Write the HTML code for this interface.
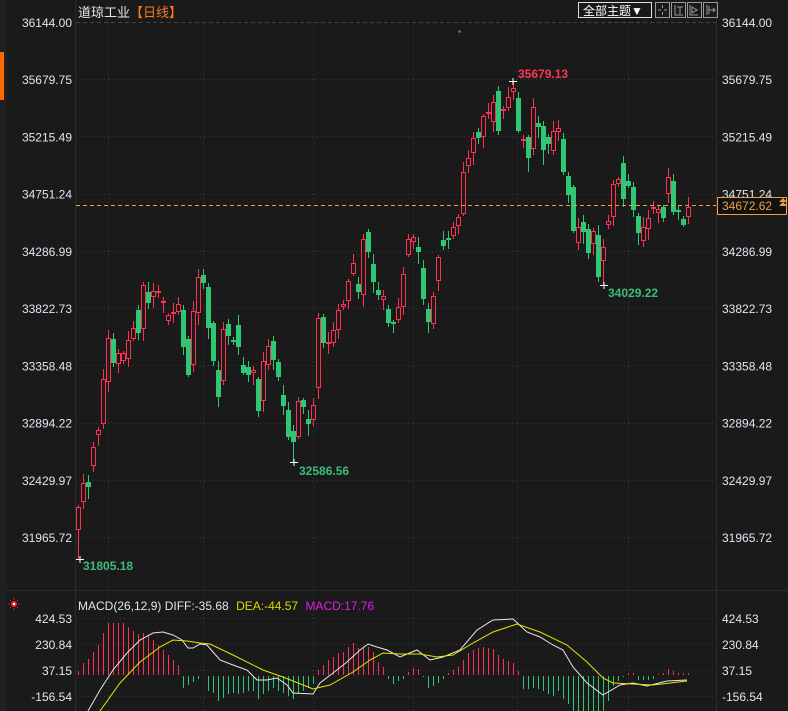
<!DOCTYPE html>
<html><head><meta charset="utf-8"><style>
html,body{margin:0;padding:0;background:#1a1a1a;}
body{width:788px;height:711px;overflow:hidden;position:relative;font-family:"Liberation Sans","Noto Sans CJK SC",sans-serif;}
svg{position:absolute;left:0;top:0;}
</style></head><body>
<svg id="s" width="788" height="711" xmlns="http://www.w3.org/2000/svg" font-family="Liberation Sans, Noto Sans CJK SC, sans-serif">
<rect width="788" height="711" fill="#1a1a1a"/>
<rect x="0" y="0" width="7" height="711" fill="#202022"/>
<rect x="0" y="52" width="4" height="48" fill="#ff6a00"/>
<line x1="75.5" y1="0" x2="75.5" y2="711" stroke="#2a2a2a"/>
<line x1="716.5" y1="0" x2="716.5" y2="711" stroke="#2a2a2a"/>
<line x1="7" y1="590.5" x2="788" y2="590.5" stroke="#2a2a2a"/>
<g id="grid" stroke="#3a3a3a" stroke-dasharray="1,3"></g>
<line x1="76" y1="22.5" x2="716" y2="22.5" stroke="#444" stroke-dasharray="4,3"/>
<g id="lbl" font-size="12" fill="#dfe6f0"></g>
<text x="78" y="17" font-size="13" fill="#e8e8e8">道琼工业</text>
<text x="130" y="17" font-size="13" fill="#ff7a1a">【日线】</text>
<rect x="578.5" y="2.5" width="73" height="15" fill="#1a1a1a" stroke="#e0e0e0"/>
<text x="583" y="15" font-size="12" fill="#fff">全部主题▼</text>
<g stroke="#999" fill="none">
<rect x="655.5" y="2.5" width="14" height="15"/><rect x="671.5" y="2.5" width="14" height="15"/><rect x="687.5" y="2.5" width="14" height="15"/><rect x="703.5" y="2.5" width="14" height="15"/>
<path d="M658 10h3M664 10h3M662.5 5v3M662.5 12v3"/>
<path d="M675 5v10h8M677 7h6M680 7v7"/>
<path d="M690 5v10h8M692 7l5 3-5 3z"/>
<path d="M707 5v10M709 6v8M709 10h6M713 8l2 2-2 2"/>
</g>
<circle cx="459.5" cy="31.5" r="1.3" fill="#2a8fd0"/>
<g id="cd"></g>
<line x1="76" y1="205.5" x2="716" y2="205.5" stroke="#f0a040" stroke-dasharray="4,3"/>
<rect x="717.5" y="197.5" width="69" height="17" fill="#111" stroke="#f0a040"/>
<text x="722" y="210" font-size="12" fill="#f0a040">34672.62</text>
<path d="M779 202l4-4 4 4zM779 206l4-4 4 4z" fill="#f0a040"/>
<g stroke="#fff"><path d="M76 559.5h8M80 556v7M290 462.5h8M294 459v7M509 81.5h8M513 78v7M600 285.5h8M604 282v7"/></g>
<text x="83" y="570" font-size="12" font-weight="bold" fill="#3dbb7a">31805.18</text>
<text x="299" y="475" font-size="12" font-weight="bold" fill="#3dbb7a">32586.56</text>
<text x="518" y="78" font-size="12" font-weight="bold" fill="#ff3355">35679.13</text>
<text x="608" y="297" font-size="12" font-weight="bold" fill="#3dbb7a">34029.22</text>
<circle cx="14" cy="604" r="3" fill="#ff2020"/><circle cx="14" cy="604" r="1.2" fill="#fff"/>
<g stroke="#ff2020" stroke-width="0.8"><path d="M14 598v2M14 608v2M8 604h2M18 604h2M10 600l1 1M17 607l1 1M18 600l-1 1M10 608l1-1"/></g>
<text x="78" y="610" font-size="12"><tspan fill="#dfe6f0">MACD(26,12,9) DIFF:-35.68  </tspan><tspan fill="#d8d800" dx="4">DEA:-44.57  </tspan><tspan fill="#e020e0" dx="4">MACD:17.76</tspan></text>
<g id="mh"></g>
<polyline fill="none" stroke="#e8e8e8" stroke-width="1" points="88,711 100,690 113,670 127,653 140,640 153,633 163,632 173,635 182,640 188,648 193,648 200,644 207,645 213,652 220,660 233,665 247,670 257,680 267,680 277,678 287,685 293,693 313,694 320,683 333,673 347,662 360,650 368,644 377,647 387,650 400,657 417,650 430,660 443,657 460,650 477,630 493,620 513,619 527,632 540,637 553,645 563,650 573,667 587,683 603,695 620,685 633,683 647,686 667,681 687,680"/>
<polyline fill="none" stroke="#e6e600" stroke-width="1" points="100,711 120,683 140,662 160,647 173,640 187,641 200,643 210,644 233,655 263,670 283,677 313,689 330,685 353,672 370,660 383,653 400,654 420,654 437,657 453,655 473,643 493,632 517,624 540,632 567,645 587,662 603,678 613,683 633,684 653,685 687,681"/>
</svg>
<script>
(function(){
var NS="http://www.w3.org/2000/svg";
function el(p,t,a){var e=document.createElementNS(NS,t);for(var k in a)e.setAttribute(k,a[k]);p.appendChild(e);return e;}
var grid=document.getElementById('grid'),lbl=document.getElementById('lbl');
var prices=["36144.00","35679.75","35215.49","34751.24","34286.99","33822.73","33358.48","32894.22","32429.97","31965.72"];
for(var i=0;i<10;i++){var y=22+i*57.22;
 if(i>0)el(grid,'line',{x1:76,x2:716,y1:Math.round(y)+.5,y2:Math.round(y)+.5});
 var t=el(lbl,'text',{x:72,y:y+5,'text-anchor':'end'});t.textContent=prices[i];
 var t2=el(lbl,'text',{x:722,y:y+5});t2.textContent=prices[i];}
[108,203,313,413,517,628].forEach(function(x){el(grid,'line',{x1:x+.5,x2:x+.5,y1:22,y2:711});});
var m=[["424.53",618],["230.84",644],["37.15",670],["-156.54",696]];
m.forEach(function(v){el(grid,'line',{x1:76,x2:716,y1:v[1]+.5,y2:v[1]+.5});
 var t=el(lbl,'text',{x:72,y:v[1]+5,'text-anchor':'end'});t.textContent=v[0];
 var t2=el(lbl,'text',{x:722,y:v[1]+5});t2.textContent=v[0];});
var D=[[530,507],[502,483],[482,487],[466,447],[435,430],[424,379],[382,338],[339,363],[364,353],[361,353],[359,340],[339,328],[310,333],[329,285],[292,303],[297,291],[293,291],[303,301],[321,315],[314,312],[312,304],[310,347],[339,375],[365,311],[313,277],[275,283],[287,328],[323,361],[370,397],[381,329],[324,336],[340,342],[325,347],[365,373],[367,375],[373,370],[379,411],[401,361],[365,346],[341,360],[362,377],[395,406],[410,437],[431,442],[437,401],[400,407],[419,424],[420,405],[388,318],[317,343],[344,342],[343,330],[330,310],[307,304],[301,281],[274,263],[284,292],[295,239],[232,252],[264,282],[290,295],[300,296],[309,323],[322,324],[320,307],[307,274],[255,239],[242,237],[247,252],[268,299],[309,322],[324,296],[281,257],[240,246],[238,240],[236,227],[226,217],[214,172],[166,158],[153,138],[132,138],[137,116],[114,112],[122,102],[91,131],[110,109],[108,97],[92,88],[98,131],[141,139],[137,158],[149,107],[123,127],[126,150],[137,144],[151,131],[132,128],[139,172],[176,195],[187,231],[243,227],[222,232],[229,253],[244,231],[235,277],[261,247],[225,221],[217,184],[184,179],[163,199],[181,186],[187,210],[216,233],[241,227],[229,218],[209,207],[213,209],[207,218],[194,177],[181,212],[210,212],[219,225],[217,207]];
var H=[4,12,16,23,30,42,52,52,52,52,48,44,41,42,40,35,30,25,20,15,10,
-12,-9,-6,-3,0,-15,-17,-25,-22,-18,-17,-18,-17,-15,-15,-23,-18,-15,-12,-15,-17,-20,-23,-18,-15,-12,-8,
5,10,15,18,22,23,28,32,27,28,28,23,13,8,-3,-8,-5,
-3,3,7,6,-1,-12,-10,-7,-3,2,5,8,15,22,25,27,28,27,26,20,16,14,12,4,-13,-13,-12,-13,-15,-18,-20,-15,-23,-28,-36,-36,-36,-36,-36,-36,-36,-25,-10,-5,-1,2,2,-4,-4,-4,-3,1,2,6,4,2,2,2];
var cd=document.getElementById('cd'),mh=document.getElementById('mh');
var R="#ff3050",G="#2fc774";
var sp={0:[null,559],43:[null,463],87:[81,null],105:[null,285],109:[156,null],90:[null,172],93:[null,165]};
for(var i=0;i<D.length;i++){
 var o=D[i][0],c=D[i][1],x=Math.round(78+5*i),up=c<=o;
 var bt=Math.min(o,c),bb=Math.max(o,c);
 var hi=bt-(2+(i*7)%9),lo=bb+(2+(i*5)%11);
 if(sp[i]){if(sp[i][0])hi=sp[i][0];if(sp[i][1])lo=sp[i][1];}
 var col=up?R:G;
 el(cd,'line',{x1:x+.5,x2:x+.5,y1:hi,y2:bt,stroke:col});
 el(cd,'line',{x1:x+.5,x2:x+.5,y1:bb,y2:lo,stroke:col});
 var h=Math.max(bb-bt,1);
 if(up)el(cd,'rect',{x:x-1.5,y:bt+.5,width:4,height:Math.max(h-1,1),fill:'none',stroke:R});
 else el(cd,'rect',{x:x-2,y:bt,width:5,height:h,fill:G});
 var v=H[i]||0;
 if(v>0)el(mh,'line',{x1:x+.5,x2:x+.5,y1:675-v,y2:675,stroke:R});
 else if(v<0)el(mh,'line',{x1:x+.5,x2:x+.5,y1:676,y2:676-v,stroke:G});
}
})();
</script>
</body></html>
